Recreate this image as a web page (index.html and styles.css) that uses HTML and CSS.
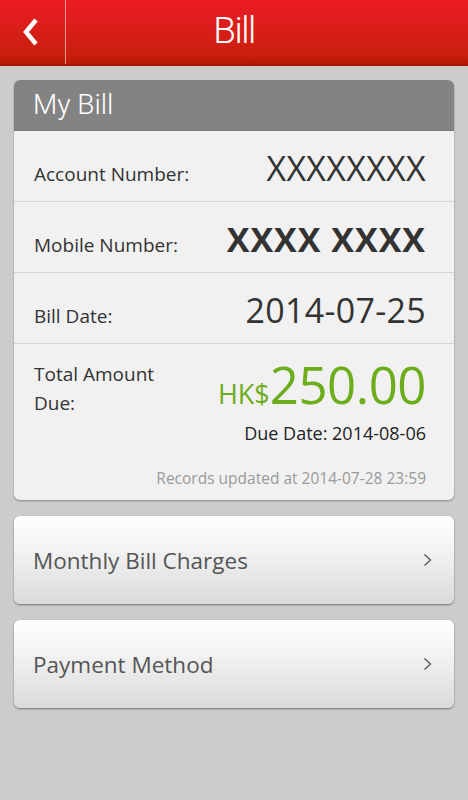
FILE: index.html
```html
<!DOCTYPE html>
<html>
<head>
<meta charset="utf-8">
<link rel="stylesheet" href="styles.css">
</head>
<body>
<header class="topbar">
  <div class="back">
    <svg width="16" height="28" viewBox="0 0 16 28"><path d="M13 2 L3 14 L13 26" fill="none" stroke="#fff" stroke-width="4.5" stroke-linejoin="miter"/></svg>
  </div>
  <h1 class="title">Bill</h1>
</header>
<main class="content">
  <section class="card">
    <div class="card-head">My Bill</div>
    <div class="row">
      <span class="label">Account Number:</span>
      <span class="value">XXXXXXXX</span>
    </div>
    <div class="row">
      <span class="label">Mobile Number:</span>
      <span class="value bold">XXXX XXXX</span>
    </div>
    <div class="row">
      <span class="label">Bill Date:</span>
      <span class="value">2014-07-25</span>
    </div>
    <div class="total">
      <div class="total-top">
        <span class="label total-label">Total Amount<br>Due:</span>
        <span class="amount"><span class="cur">HK$</span>250.00</span>
      </div>
      <div class="due">Due Date: 2014-08-06</div>
      <div class="updated">Records updated at 2014-07-28 23:59</div>
    </div>
  </section>
  <a class="btn">Monthly Bill Charges<svg class="chev" width="9" height="14" viewBox="0 0 9 14"><path d="M1.5 1.5 L7.5 7 L1.5 12.5" fill="none" stroke="#555" stroke-width="1.3"/></svg></a>
  <a class="btn">Payment Method<svg class="chev" width="9" height="14" viewBox="0 0 9 14"><path d="M1.5 1.5 L7.5 7 L1.5 12.5" fill="none" stroke="#555" stroke-width="1.3"/></svg></a>
</main>
</body>
</html>
```
FILE: styles.css
```css
* { box-sizing: border-box; }
html, body { margin: 0; padding: 0; }
body {
  background: #cccccc;
  font-family: "Open Sans", "DejaVu Sans", sans-serif;
  width: 468px;
  height: 800px;
  overflow: hidden;
}
.topbar {
  height: 66px;
  display: flex;
  align-items: stretch;
  background: linear-gradient(#ec1c24, #c9200f 85%, #b51a05);
  border-bottom: 2px solid #a81500;
}
.back {
  width: 66px;
  display: flex;
  align-items: center;
  justify-content: center;
  padding-right: 4px;
  border-right: 1px solid rgba(255,255,255,0.55);
}
.title {
  flex: 1;
  margin: 0;
  text-align: center;
  color: #fff;
  font-family: Roboto, "Open Sans", sans-serif;
  font-weight: 300;
  font-size: 37px;
  line-height: 62px;
  padding-right: 66px;
  letter-spacing: -1.5px;
}
.content {
  padding: 14px 14px 0 14px;
  display: flex;
  flex-direction: column;
  gap: 16px;
}
.card {
  background: #f1f1f1;
  border-radius: 6px;
  overflow: hidden;
  box-shadow: 0 1px 2px rgba(0,0,0,0.35);
}
.card-head {
  background: #838383;
  color: #fff;
  font-family: Roboto, "Open Sans", sans-serif;
  font-weight: 300;
  font-size: 28px;
  height: 51px;
  line-height: 50px;
  padding-left: 19px;
  border-bottom: 1px solid #777;
}
.row {
  height: 71px;
  display: flex;
  align-items: baseline;
  justify-content: space-between;
  padding: 17px 28px 0 20px;
  border-bottom: 1px solid #d6d6d6;
}
.label {
  font-size: 19px;
  line-height: 40px;
  color: #333;
}
.value {
  font-size: 34px;
  line-height: 40px;
  color: #333;
  letter-spacing: 0.3px;
}
.value.bold { font-weight: 700; font-size: 34px; letter-spacing: 1px; }
.total {
  padding: 10px 28px 11px 20px;
  display: flex;
  flex-direction: column;
}
.total-top {
  display: flex;
  justify-content: space-between;
  align-items: flex-start;
}
.total-label { padding-top: 6px; line-height: 29px; }
.amount {
  color: #6cad1b;
  font-size: 51px;
  line-height: 60px;
  letter-spacing: -0.5px;
}
.cur { font-size: 27px; letter-spacing: 0; }
.due {
  text-align: right;
  font-size: 18px;
  color: #222;
  margin-top: -3px;
}
.updated {
  text-align: right;
  font-size: 15.5px;
  color: #9a9a9a;
  margin-top: 22px;
}
.btn {
  display: flex;
  align-items: center;
  justify-content: space-between;
  height: 88px;
  padding: 0 22px 0 19px;
  border-radius: 6px;
  background: linear-gradient(#ffffff, #f2f2f2 40%, #dadada);
  box-shadow: 0 1px 2px rgba(0,0,0,0.45);
  color: #555;
  font-size: 22.5px;
}
.chev { flex: none; }
```
